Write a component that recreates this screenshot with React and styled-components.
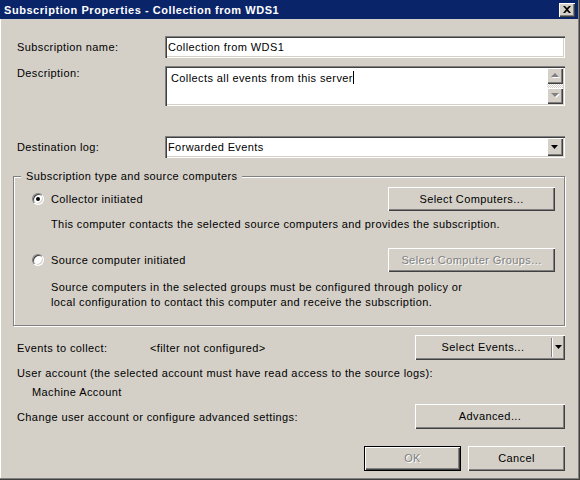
import styled, { createGlobalStyle, css } from "styled-components";

const GlobalStyle = createGlobalStyle`
  html, body {
    margin: 0;
    padding: 0;
    background: #d4d0c8;
  }
  body {
    font-family: "Liberation Sans", Arial, sans-serif;
    font-size: 11px;
    letter-spacing: 0.4px;
    color: #000;
  }
`;

const bevel = css`
  box-shadow: inset 1px 1px #fff, inset -1px -1px #404040, inset -2px -2px #808080;
`;

const sunken = css`
  box-shadow: inset 1px 1px #808080, inset 2px 2px #404040, inset -1px -1px #fff,
    inset -2px -2px #d4d0c8;
`;

const Window = styled.div`
  box-sizing: border-box;
  width: 580px;
  height: 480px;
  padding: 0 2px 2px 0;
  background: #d4d0c8;
  box-shadow: inset -1px -1px #404040, inset -2px -2px #808080, inset 1px 0 #fff;
  display: flex;
  flex-direction: column;
  overflow: hidden;
`;

const TitleBar = styled.div`
  height: 19px;
  flex: none;
  background: #0a246a;
  color: #fff;
  font-weight: bold;
  letter-spacing: 0.55px;
  display: flex;
  align-items: center;
  justify-content: space-between;
  padding: 0 3px 0 4px;
`;

const CloseButton = styled.div`
  box-sizing: border-box;
  width: 16px;
  height: 14px;
  background: #d4d0c8;
  ${bevel};
  display: flex;
  align-items: center;
  justify-content: center;
  padding: 0 1px 1px 0;
`;

const Body = styled.div`
  display: flex;
  flex-direction: column;
  padding: 0 13px;
`;

const FieldRow = styled.div`
  display: grid;
  grid-template-columns: 148px 1fr;
  align-items: ${(p) => (p.$top ? "start" : "center")};
  padding-left: 4px;
  margin-top: ${(p) => p.$mt}px;
`;

const Label = styled.div`
  line-height: 14px;
  white-space: nowrap;
`;

const Field = styled.div`
  box-sizing: border-box;
  height: ${(p) => p.$h}px;
  background: #fff;
  ${sunken};
  display: flex;
  align-items: ${(p) => (p.$top ? "flex-start" : "center")};
  padding: ${(p) => (p.$top ? "5px 2px 2px 6px" : "2px 2px 2px 3px")};
`;

const FieldText = styled.div`
  flex: 1;
  line-height: 14px;
  white-space: nowrap;
`;

const Caret = styled.span`
  display: inline-block;
  width: 1px;
  height: 13px;
  background: #000;
  vertical-align: -2px;
`;

const ScrollBar = styled.div`
  width: 16px;
  align-self: stretch;
  margin-top: -3px;
  display: flex;
  flex-direction: column;
`;

const ScrollTrack = styled.div`
  flex: 1;
  background: repeating-conic-gradient(#fff 0 25%, #d4d0c8 0 50%) 0 0 / 2px 2px;
`;

const ArrowBox = styled.div`
  box-sizing: border-box;
  width: 16px;
  height: ${(p) => p.$h}px;
  background: #d4d0c8;
  ${bevel};
  display: flex;
  align-items: center;
  justify-content: center;
  padding: 0 1px 1px 0;
  flex: none;
`;

const Group = styled.div`
  position: relative;
  box-sizing: border-box;
  height: 150px;
  margin-top: 18px;
  border: 1px solid #808080;
  box-shadow: inset 1px 1px #fff, 1px 1px #fff;
  padding: 10px 9px 0 18px;
  display: flex;
  flex-direction: column;
`;

const Legend = styled.div`
  position: absolute;
  top: -8px;
  left: 7px;
  padding: 0 5px;
  line-height: 14px;
  background: #d4d0c8;
`;

const RadioRow = styled.div`
  display: flex;
  align-items: center;
  justify-content: space-between;
  margin-top: ${(p) => p.$mt || 0}px;
`;

const RadioLabel = styled.label`
  display: flex;
  align-items: center;
  gap: 7px;
`;

const Radio = styled.span`
  box-sizing: border-box;
  position: relative;
  width: 12px;
  height: 12px;
  border-radius: 50%;
  background: #fff;
  border: 1px solid;
  border-color: #808080 #fff #fff #808080;
  box-shadow: inset 1px 1px #404040, inset -1px -1px #d4d0c8;
  ${(p) =>
    p.$checked &&
    css`
      &::after {
        content: "";
        position: absolute;
        left: 3px;
        top: 3px;
        width: 4px;
        height: 4px;
        border-radius: 50%;
        background: #000;
      }
    `}
`;

const Note = styled.div`
  padding-left: 19px;
  line-height: 15px;
  margin-top: ${(p) => p.$mt || 0}px;
`;

const Button = styled.button`
  box-sizing: border-box;
  width: ${(p) => p.$w}px;
  height: ${(p) => p.$h || 25}px;
  margin: 0;
  padding: 0 0 1px;
  border: ${(p) => (p.$default ? "1px solid #000" : "none")};
  background: #d4d0c8;
  ${bevel};
  font: 11px "Liberation Sans", Arial, sans-serif;
  letter-spacing: 0.4px;
  color: ${(p) => (p.disabled ? "#808080" : "#000")};
  text-shadow: ${(p) => (p.disabled ? "1px 1px #fff" : "none")};
  display: flex;
  align-items: center;
  justify-content: center;
`;

const SplitButton = styled.div`
  box-sizing: border-box;
  width: 150px;
  height: 25px;
  background: #d4d0c8;
  ${bevel};
  display: flex;
  align-items: center;
  padding: 0 2px 1px 0;
`;

const SplitMain = styled.div`
  flex: 1;
  text-align: center;
`;

const SplitDivider = styled.div`
  width: 1px;
  height: 19px;
  background: #808080;
  border-right: 1px solid #fff;
`;

const SplitArrow = styled.div`
  width: 10px;
  display: flex;
  justify-content: center;
`;

const LineRow = styled.div`
  display: flex;
  align-items: center;
  padding-left: ${(p) => p.$pl ?? 4}px;
  margin-top: ${(p) => p.$mt}px;
  line-height: 14px;
`;

const EventsLabel = styled.div`
  width: 133px;
`;

const Spacer = styled.div`
  flex: 1;
`;

const Footer = styled.div`
  display: flex;
  justify-content: flex-end;
  gap: 7px;
  margin-top: 17px;
`;

const DownArrow = ({ color = "#000" }) => (
  <svg width="7" height="4" viewBox="0 0 7 4">
    <path d="M0 0h7L3.5 4z" fill={color} />
  </svg>
);

const GrayArrow = ({ up }) => (
  <svg width="10" height="7" viewBox="0 0 10 7">
    <path d={up ? "M1 5h8L5 1z" : "M1 1h8L5 5z"} fill="#fff" transform="translate(1 1)" />
    <path d={up ? "M1 5h8L5 1z" : "M1 1h8L5 5z"} fill="#808080" />
  </svg>
);

const CloseIcon = () => (
  <svg width="8" height="7" viewBox="0 0 8 7">
    <path d="M0 0h2l2 2 2-2h2L5 3.5 8 7H6L4 5 2 7H0l3-3.5z" fill="#000" />
  </svg>
);

export default function App() {
  return (
    <>
      <GlobalStyle />
      <Window>
        <TitleBar>
          <span>Subscription Properties - Collection from WDS1</span>
          <CloseButton>
            <CloseIcon />
          </CloseButton>
        </TitleBar>
        <Body>
          <FieldRow $mt={17}>
            <Label>Subscription name:</Label>
            <Field $h={22}>
              <FieldText>Collection from WDS1</FieldText>
            </Field>
          </FieldRow>
          <FieldRow $mt={8} $top>
            <Label>Description:</Label>
            <Field $h={40} $top>
              <FieldText>
                Collects all events from this server
                <Caret />
              </FieldText>
              <ScrollBar>
                <ArrowBox $h={16}>
                  <GrayArrow up />
                </ArrowBox>
                <ScrollTrack />
                <ArrowBox $h={16}>
                  <GrayArrow />
                </ArrowBox>
              </ScrollBar>
            </Field>
          </FieldRow>
          <FieldRow $mt={30}>
            <Label>Destination log:</Label>
            <Field $h={22}>
              <FieldText>Forwarded Events</FieldText>
              <ArrowBox $h={18}>
                <DownArrow />
              </ArrowBox>
            </Field>
          </FieldRow>

          <Group>
            <Legend>Subscription type and source computers</Legend>
            <RadioRow>
              <RadioLabel>
                <Radio $checked />
                Collector initiated
              </RadioLabel>
              <Button $w={167} $h={24}>
                Select Computers...
              </Button>
            </RadioRow>
            <Note $mt={6}>
              This computer contacts the selected source computers and provides the subscription.
            </Note>
            <RadioRow $mt={16}>
              <RadioLabel>
                <Radio />
                Source computer initiated
              </RadioLabel>
              <Button $w={167} $h={24} disabled>
                Select Computer Groups...
              </Button>
            </RadioRow>
            <Note $mt={8}>
              Source computers in the selected groups must be configured through policy or
              <br />
              local configuration to contact this computer and receive the subscription.
            </Note>
          </Group>

          <LineRow $mt={9}>
            <EventsLabel>Events to collect:</EventsLabel>
            <span>&lt;filter not configured&gt;</span>
            <Spacer />
            <SplitButton>
              <SplitMain>Select Events...</SplitMain>
              <SplitDivider />
              <SplitArrow>
                <DownArrow />
              </SplitArrow>
            </SplitButton>
          </LineRow>
          <LineRow $mt={6}>
            User account (the selected account must have read access to the source logs):
          </LineRow>
          <LineRow $mt={5} $pl={19}>
            Machine Account
          </LineRow>
          <LineRow $mt={5}>
            <span>Change user account or configure advanced settings:</span>
            <Spacer />
            <Button $w={150}>Advanced...</Button>
          </LineRow>
          <Footer>
            <Button $w={97} $default disabled>
              OK
            </Button>
            <Button $w={97}>Cancel</Button>
          </Footer>
        </Body>
      </Window>
    </>
  );
}
